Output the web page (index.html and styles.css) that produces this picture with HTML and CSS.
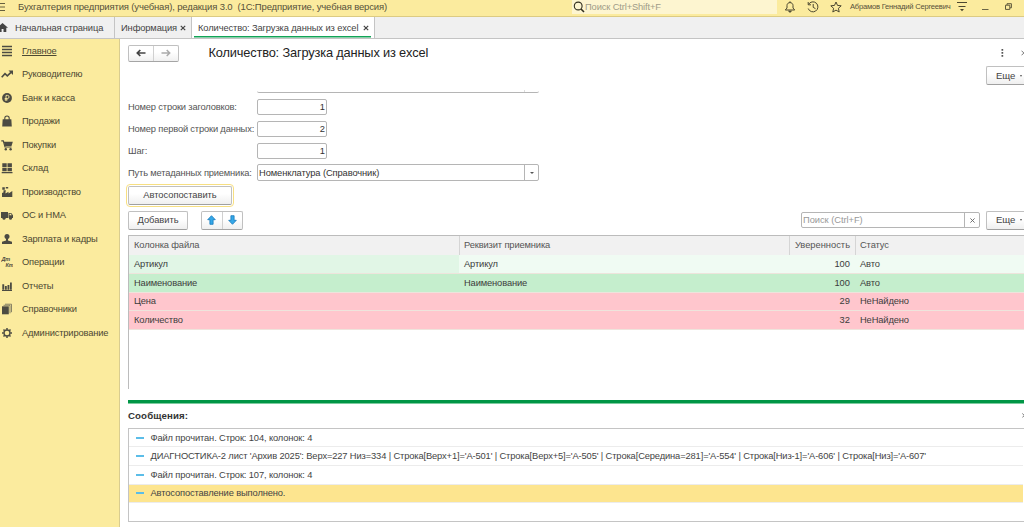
FILE: index.html
```html
<!DOCTYPE html>
<html lang="ru">
<head>
<meta charset="utf-8">
<title>Бухгалтерия предприятия</title>
<link rel="stylesheet" href="styles.css">
</head>
<body>
<header class="topbar">
  <svg class="burger" width="6" height="10" viewBox="0 0 6 10"><path d="M0 1.5h5M0 5h5M0 8.5h5" stroke="#66603f"/></svg>
  <span class="app-title">Бухгалтерия предприятия (учебная), редакция 3.0&nbsp; (1С:Предприятие, учебная версия)</span>
  <div class="global-search">
    <svg width="12" height="12" viewBox="0 0 12 12" fill="none" stroke="#33301f"><circle cx="5.2" cy="5" r="3.9" stroke-width="1.1"/><path d="M8 8l3 3" stroke-width="1.6"/></svg>
    <span class="global-hint">Поиск Ctrl+Shift+F</span>
  </div>
  <div class="top-tools">
    <svg width="12" height="12" viewBox="0 0 12 12" fill="none" stroke="#4b4730" stroke-width="1"><path d="M1.3 9h9.4L9 7V4.5C9 2.700 7.700 1.600 6 1.600S3 2.700 3 4.500V7zM6 .3v1.300"/><path d="M4.600 10.200h2.800L6 11.300z" fill="#4b4730"/></svg>
    <svg width="12" height="12" viewBox="0 0 12 12" fill="none" stroke="#4b4730" stroke-width="1"><path d="M1.500 3.500A5 5 0 1 1 1.200 7.500M1.200 1v2.800H4M6.200 3v3.300l2.300 1.400"/></svg>
    <svg width="12" height="12" viewBox="0 0 12 12" fill="none" stroke="#4b4730" stroke-width="1"><path d="M6 1l1.500 3.400 3.700.4-2.800 2.500.8 3.700L6 9.100 2.800 11l.8-3.700L.8 4.800l3.700-.4z"/></svg>
  </div>
  <span class="user">Абрамов Геннадий Сергеевич</span>
  <svg class="filter" width="10" height="11" viewBox="0 0 10 11"><path d="M0 1.500h10M1.500 5.500h7" stroke="#4b4730"/><path d="M3 8h4L5 10.300z" fill="#4b4730"/></svg>
  <svg class="minimize" width="7" height="10" viewBox="0 0 7 10"><path d="M0 7.500h6.500" stroke="#6b6647"/></svg>
  <svg class="restore" width="7" height="7" viewBox="0 0 7 7" fill="none" stroke="#5d583c"><path d="M.5 2.200h4.300v4.200H.5zM2 2V.700h4.400v4.100H5"/></svg>
</header>

<nav class="tabs">
  <div class="tab home">
    <svg width="8" height="9" viewBox="0 0 8 9" fill="#444"><path d="M2.500 0L8 4.800H6.300V9H3.500V6H1.600v3H0V2.200z"/></svg>
    <span>Начальная страница</span>
  </div>
  <div class="tab info">
    <span>Информация</span>
    <svg class="x" width="6" height="6" viewBox="0 0 6 6"><path d="M.8.800l4.400 4.400M5.200.800L.8 5.200" stroke="#444" stroke-width="1.200"/></svg>
  </div>
  <div class="tab active">
    <span>Количество: Загрузка данных из excel</span>
    <svg class="x" width="6" height="6" viewBox="0 0 6 6"><path d="M.8.800l4.400 4.400M5.200.800L.8 5.200" stroke="#444" stroke-width="1.200"/></svg>
  </div>
</nav>

<div class="shell">
  <aside class="sidebar">
    <a class="item current"><svg viewBox="0 0 12 12"><path d="M1 1.500h10M1 4.500h10M1 7.500h10M1 10.500h10" stroke="#4c4b42" stroke-width="1.300"/></svg><span>Главное</span></a>
    <a class="item"><svg viewBox="0 0 12 12"><path d="M.7 9.300L4 5.600l2.300 2.200L10 4.300" fill="none" stroke="#4c4b42" stroke-width="1.600"/><path d="M7.500 2.500H12V7z" fill="#4c4b42"/></svg><span>Руководителю</span></a>
    <a class="item"><svg viewBox="0 0 12 12"><circle cx="6" cy="6" r="4.900" fill="#4c4b42"/><path d="M5 9V3.400h1.500a1.500 1.500 0 0 1 0 3.100H3.700M3.700 7.800h3" fill="none" stroke="#fbeb9e" stroke-width=".9"/></svg><span>Банк и касса</span></a>
    <a class="item"><svg viewBox="0 0 12 12"><path d="M1.700 4.200h8.600l.5 7.300H1.200z" fill="#4c4b42"/><path d="M3.800 5.500V3.300c0-3 4.400-3 4.400 0v2.200" fill="none" stroke="#4c4b42" stroke-width="1.100"/></svg><span>Продажи</span></a>
    <a class="item"><svg viewBox="0 0 12 12"><path d="M.3 1.800h2L4 8h6.500" fill="none" stroke="#4c4b42" stroke-width="1.200"/><path d="M2.800 2.800h9L10.500 7H4z" fill="#4c4b42"/><circle cx="4.800" cy="10.200" r="1.200" fill="#4c4b42"/><circle cx="9.600" cy="10.200" r="1.200" fill="#4c4b42"/></svg><span>Покупки</span></a>
    <a class="item"><svg viewBox="0 0 12 12" fill="#4c4b42"><path d="M1.300 1.300h4.400v3.900H1.300zM6.500 1.300h4.400v3.900H6.500zM1.300 6h4.400v3.300H1.300zM6.500 6h4.400v3.300H6.500zM.7 10h10.800v1.200H.7z"/></svg><span>Склад</span></a>
    <a class="item"><svg viewBox="0 0 12 12" fill="#4c4b42"><path d="M1 11V7l3.500-1.500v2l3-1.800v1.800L11.300 5v6zM1.300 1.200h2.500v2.600H1.300zM4.800 1h2.400v1.500H4.800zM2.500 4.200h2.300v1.300l-2.300 1z"/></svg><span>Производство</span></a>
    <a class="item"><svg viewBox="0 0 12 12" fill="#4c4b42"><path d="M0 3h7v6H0zM7.500 4h2.700L12 6.300V9H7.500z"/><circle cx="3" cy="9.300" r="1.500"/><circle cx="9.500" cy="9.300" r="1.500"/><path d="M8.500 4.800h1.300l1 1.400H8.500z" fill="#fbeb9e"/></svg><span>ОС и НМА</span></a>
    <a class="item"><svg viewBox="0 0 12 12" fill="#4c4b42"><circle cx="6" cy="3.600" r="2.500"/><path d="M5 5h2v2.500l4 1.200V11H1V8.700l4-1.200z"/></svg><span>Зарплата и кадры</span></a>
    <a class="item"><svg viewBox="0 0 12 12" fill="#4c4b42" class="dtkt"><text x=".5" y="5">Дт</text><text x="4.500" y="11">Кт</text></svg><span>Операции</span></a>
    <a class="item"><svg viewBox="0 0 12 12" fill="#4c4b42"><path d="M1.300 4.300h1.900v5.500H1.300zM3.900 6h1.900v3.800H3.900zM6.500 5h1.900v4.800H6.500zM9 2.500h1.800v7.300H9zM1 10h10v.9H1z"/></svg><span>Отчеты</span></a>
    <a class="item"><svg viewBox="0 0 12 12" fill="#4c4b42"><path d="M1 3.300h6.800v8H1z"/><path d="M2.500 2.300h6.500v8M4 1.200h6.500v8" fill="none" stroke="#6d6a58" stroke-width=".8"/></svg><span>Справочники</span></a>
    <a class="item"><svg viewBox="0 0 12 12" fill="none" stroke="#4c4b42"><circle cx="6" cy="6" r="3" stroke-width="1.400"/><path d="M6 1v1.700M6 9.300V11M1 6h1.700M9.300 6H11M2.500 2.500l1.200 1.200M8.300 8.300l1.200 1.200M9.500 2.500L8.300 3.700M3.700 8.300L2.500 9.500" stroke-width="1.500"/></svg><span>Администрирование</span></a>
  </aside>

  <main class="page">
    <div class="heading">
      <div class="pair nav-pair">
        <span><svg width="10" height="8" viewBox="0 0 10 8"><path d="M9.500 4H2M4.300 1L1.300 4l3 3" fill="none" stroke="#444" stroke-width="1.700"/></svg></span>
        <span><svg width="10" height="8" viewBox="0 0 10 8"><path d="M.5 4H8M5.700 1l3 3-3 3" fill="none" stroke="#aaa" stroke-width="1.500"/></svg></span>
      </div>
      <h1>Количество: Загрузка данных из excel</h1>
      <svg class="dots" width="3" height="8" viewBox="0 0 3 8" fill="#555"><path d="M.5 0h1.700v1.700H.5zM.5 3h1.700v1.700H.5zM.5 6h1.700v1.700H.5z"/></svg>
      <svg class="close" width="3" height="6" viewBox="0 0 3 6"><path d="M.5.700l4.600 4.600M.5 5.300L5.100.700" stroke="#777"/></svg>
    </div>
    <div class="more-line"><button class="btn more">Еще <i class="caret"></i></button></div>
    <div class="cut-field"><i></i></div>

    <div class="form">
      <label>Номер строки заголовков:</label><div class="num">1</div>
      <label>Номер первой строки данных:</label><div class="num">2</div>
      <label>Шаг:</label><div class="num">1</div>
      <label>Путь метаданных приемника:</label>
      <div class="combo"><span>Номенклатура (Справочник)</span><b><i class="caret"></i></b></div>
    </div>

    <button class="btn auto">Автосопоставить</button>

    <div class="commands">
      <button class="btn add">Добавить</button>
      <div class="pair move-pair">
        <span><svg width="9" height="10" viewBox="0 0 9 10"><path d="M4.500.700L8.300 4.700H6.100v4.600H2.900V4.700H.7z" fill="#35a8e8" stroke="#1479bd" stroke-width=".8"/></svg></span>
        <span><svg width="9" height="10" viewBox="0 0 9 10"><path d="M4.500 9.300L8.300 5.300H6.100V.700H2.900v4.600H.7z" fill="#35a8e8" stroke="#1479bd" stroke-width=".8"/></svg></span>
      </div>
      <div class="list-search"><span>Поиск (Ctrl+F)</span><b><svg width="5" height="5" viewBox="0 0 5 5"><path d="M.4.400l4.200 4.200M4.600.400L.4 4.600" stroke="#666" stroke-width=".9"/></svg></b></div>
      <button class="btn more">Еще <i class="caret"></i></button>
    </div>

    <div class="grid">
      <div class="row head"><span>Колонка файла</span><span>Реквизит приемника</span><span class="r">Уверенность</span><span>Статус</span></div>
      <div class="row pale"><span class="cell-current">Артикул</span><span>Артикул</span><span class="r">100</span><span>Авто</span></div>
      <div class="row green"><span>Наименование</span><span>Наименование</span><span class="r">100</span><span>Авто</span></div>
      <div class="row red"><span>Цена</span><span></span><span class="r">29</span><span>НеНайдено</span></div>
      <div class="row red"><span>Количество</span><span></span><span class="r">32</span><span>НеНайдено</span></div>
    </div>

    <div class="splitter"></div>
    <div class="messages-title"><strong>Сообщения:</strong><svg width="2" height="5" viewBox="0 0 2 5"><path d="M.3.500l4 4M.3 4.500l4-4" stroke="#777"/></svg></div>
    <div class="messages">
      <div class="msg"><i></i><span>Файл прочитан. Строк: 104, колонок: 4</span></div>
      <div class="msg"><i></i><span>ДИАГНОСТИКА-2 лист 'Архив 2025': Верх=227 Низ=334 | Строка[Верх+1]='А-501' | Строка[Верх+5]='А-505' | Строка[Середина=281]='А-554' | Строка[Низ-1]='А-606' | Строка[Низ]='А-607'</span></div>
      <div class="msg"><i></i><span>Файл прочитан. Строк: 107, колонок: 4</span></div>
      <div class="msg selected"><i></i><span>Автосопоставление выполнено.</span></div>
    </div>
  </main>
</div>
</body>
</html>
```
FILE: styles.css
```css
* { box-sizing: border-box; }
body {
  margin: 0;
  width: 1024px;
  height: 527px;
  overflow: hidden;
  display: flex;
  flex-direction: column;
  background: #fff;
  font: 9.33px/12px "Liberation Sans", Arial, sans-serif;
  letter-spacing: -.13px;
  color: #444;
  white-space: nowrap;
}
svg { display: block; flex: none; }

.topbar {
  height: 17px;
  flex: none;
  display: flex;
  align-items: center;
  background: #fbeb9e;
  border-bottom: 1px solid #dccb83;
  padding-bottom: 3px;
  color: #56513a;
}
.burger { width: 6px; }
.app-title { width: 560px; margin-left: 12px; flex: none; font-size: 9.5px; letter-spacing: -.15px; }
.global-search { width: 205px; height: 15px; margin-left: -6px; flex: none; display: flex; align-items: center; background: #fdf5d0; padding-left: 1px; }
.global-hint { color: #a09c88; font-size: 9.33px; }
.top-tools { display: flex; gap: 11px; margin-left: 7px; width: 58px; flex: none; }
.user { width: 100px; margin-left: 8px; font-size: 7.6px; letter-spacing: -.22px; flex: none; }
.filter { margin-left: 7px; }
.minimize { margin-left: 15px; }
.restore { margin-left: 16px; }

.tabs {
  height: 22px;
  flex: none;
  display: flex;
  background: #f0f0f0;
  border-bottom: 1px solid #c4c4c4;
  letter-spacing: -.11px;
}
.tab { display: flex; align-items: center; border-right: 1px solid #c4c4c4; flex: none; }
.tab .x { margin-left: auto; }
.home { width: 115px; gap: 7px; }
.info { width: 77px; padding: 0 5px 0 6px; }
.active { width: 183px; padding: 0 5px 0 6px; background: linear-gradient(#12a457, #12a457) 2px 18.500px / 177px 1.500px no-repeat #fff; }

.shell { flex: 1; min-height: 0; display: flex; }
.sidebar { width: 120px; flex: none; background: #fbeb9e; border-right: 1px solid #d9cc90; letter-spacing: -.16px; }
.item { height: 23.5px; display: flex; align-items: center; padding-left: 1px; gap: 9px; color: #4c4832; }
.item svg { width: 12px; height: 12px; }
.current span { text-decoration: underline; }
.dtkt text { font: bold italic 5.5px "Liberation Sans", sans-serif; }

.page { flex: 1; min-width: 0; padding: 5px 0 0 8px; display: flex; flex-direction: column; }
.heading { display: flex; align-items: center; height: 18px; flex: none; }
h1 { margin: 0 0 0 29.5px; width: 792.5px; font-weight: 400; font-size: 12.8px; letter-spacing: -.16px; line-height: 16px; color: #222; }
.pair { display: flex; border: 1px solid #c0c0c0; border-bottom-color: #a5a5a5; border-radius: 2px; background: linear-gradient(#fff 40%, #f0f0f0); flex: none; }
.pair span { flex: 1; display: flex; align-items: center; justify-content: center; }
.pair span + span { border-left: 1px solid #d0d0d0; }
.nav-pair { width: 51px; height: 17px; }
.close { margin-left: 17px; }

.btn { font: inherit; letter-spacing: -.03px; color: #444; margin: 0; padding: 0; height: 19px; flex: none; border: 1px solid #c0c0c0; border-bottom-color: #a0a0a0; border-radius: 2px; background: linear-gradient(#fff 40%, #efefef); }
.caret { display: inline-block; border: 1.5px solid transparent; border-top: 2px solid #555; border-bottom: 0; }
.combo .caret { border-width: 2px 2px 0; }
.more-line { display: flex; justify-content: flex-end; margin-top: 4px; height: 19px; flex: none; }
.more { width: 38px; padding-left: 9px; display: flex; align-items: center; gap: 5px; border-right: 0; border-radius: 2px 0 0 2px; font-size: 9.600px; }
.cut-field { height: 3px; width: 282px; margin: 5px 0 0 129px; border-bottom: 1px solid #b5b5b5; border-radius: 0 0 2px 2px; display: flex; justify-content: flex-end; flex: none; }
.cut-field i { width: 15px; height: 2px; border-left: 1px solid #ddd; }

.form { margin-top: 6px; display: grid; grid-template-columns: 129px 282px; grid-auto-rows: 16.500px; row-gap: 5.300px; align-items: center; flex: none; color: #555; letter-spacing: -.17px; }
.num { width: 70px; height: 16px; border: 1px solid #b5b5b5; border-radius: 2px; padding-right: 1px; text-align: right; line-height: 15px; color: #333; letter-spacing: 0; }
.combo { height: 17px; border: 1px solid #b5b5b5; border-radius: 2px; display: flex; align-items: center; justify-content: space-between; padding-left: 1px; color: #333; letter-spacing: -.1px; }
.combo b, .list-search b { height: 100%; border-left: 1px solid #b5b5b5; display: flex; align-items: center; justify-content: center; }
.combo b { width: 14px; }

.auto { width: 104px; margin-top: 5px; outline: 1.5px solid #f7df82; outline-offset: 1px; }
.commands { display: flex; align-items: center; margin-top: 6px; height: 19px; flex: none; }
.add { width: 60px; }
.move-pair { width: 42px; height: 19px; margin-left: 13px; }
.list-search { width: 179px; height: 16px; margin-left: auto; margin-right: 6px; border: 1px solid #b5b5b5; border-radius: 2px; display: flex; align-items: center; justify-content: space-between; padding-left: 1px; color: #999; letter-spacing: -.05px; }
.list-search b { width: 15px; }

.grid { margin-top: 5px; height: 154px; flex: none; border-top: 1px solid #bcbcbc; border-left: 1px solid #bcbcbc; }
.row { display: grid; grid-template-columns: 330px 330px 66px 1fr; height: 18.600px; color: #3c3c3c; }
.row span { padding: 0 5px; display: flex; align-items: center; border-bottom: 1px solid #eee4dc; }
.row .r { justify-content: flex-end; letter-spacing: 0; }
.row.head { height: 19.500px; background: #f1f1f1; color: #555; }
.row.head span { border-bottom: 0; padding-bottom: 2px; }
.row.head span + span { border-left: 1px solid #d5d5d5; padding-left: 4px; }
.pale { background: #f0fbf3; }
.row .cell-current { background: #e1f6e6; }
.green { background: #c5eecd; }
.red { background: #ffc6cd; }

.splitter { height: 4px; margin-top: 11px; background: #009646; border-bottom: 1px solid #7dcb9f; flex: none; }
.messages-title { display: flex; align-items: center; justify-content: space-between; height: 24px; flex: none; font-size: 9.700px; letter-spacing: .1px; color: #333; }
.messages { height: 94px; flex: none; border: 1px solid #c4c4c4; border-right: 0; padding-right: 1px; }
.msg { height: 18.600px; display: flex; align-items: center; padding-left: 7px; gap: 6.500px; border-bottom: 1px solid #ececec; }
.msg i { width: 8px; height: 2px; background: #5bbde8; }
.msg.selected { background: #fde58f; }
```
